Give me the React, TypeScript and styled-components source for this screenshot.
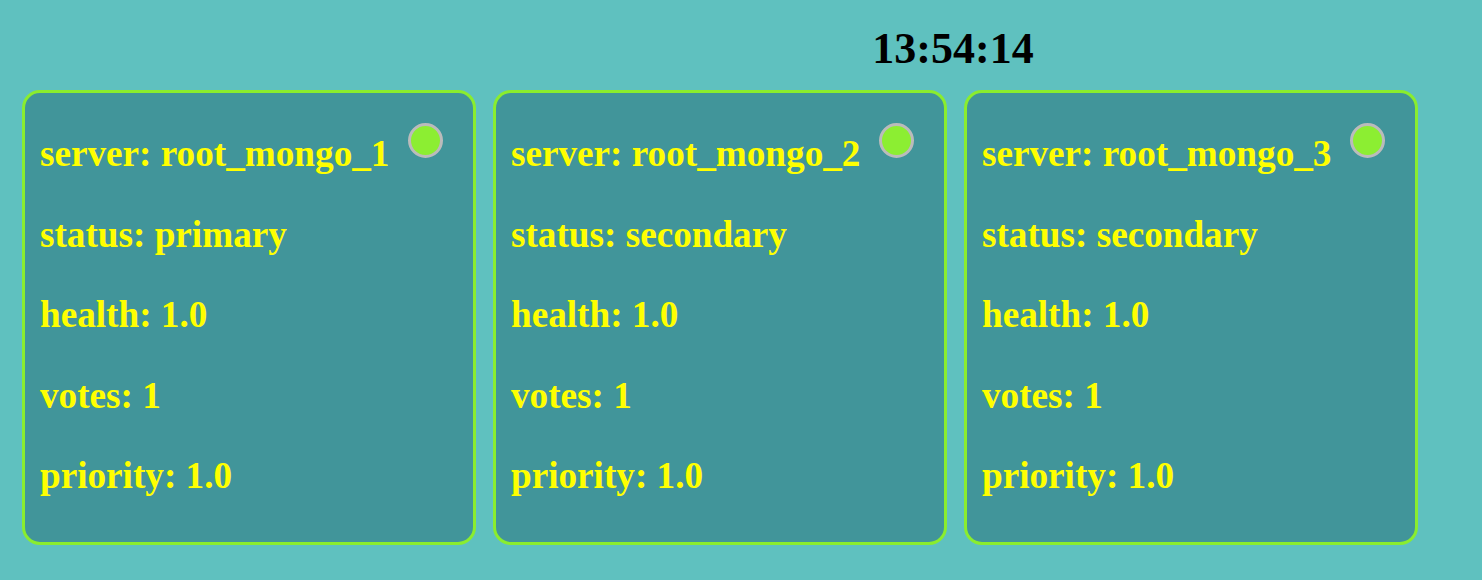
import React from "react";
import styled, { createGlobalStyle } from "styled-components";

const Global = createGlobalStyle`
  html, body {
    margin: 0;
    padding: 0;
    background: #5fc1bf;
  }
  body {
    font-family: "Liberation Serif", "Times New Roman", serif;
  }
`;

const Page = styled.div`
  display: grid;
  grid-template-columns: repeat(3, 454px);
  column-gap: 17px;
  row-gap: 16px;
  padding: 24px 0 0 22px;
  min-height: 580px;
  box-sizing: border-box;
  align-content: start;
`;

const Clock = styled.div`
  grid-column: 2 / 4;
  text-align: center;
  padding-right: 5px;
  font-size: 44px;
  line-height: 50px;
  font-weight: bold;
  color: #000;
`;

const Card = styled.div`
  position: relative;
  box-sizing: border-box;
  height: 455px;
  background: #41959a;
  border: 3px solid #8aed2e;
  border-radius: 18px;
  padding: 39px 15px 0 15px;
  display: flex;
  flex-direction: column;
  gap: 37.5px;
`;

const Line = styled.div`
  font-size: 37.2px;
  line-height: 43px;
  font-weight: bold;
  color: #ffff00;
  white-space: nowrap;
`;

const Dot = styled.span<{ $color: string }>`
  position: absolute;
  top: 30px;
  right: 30px;
  width: 35px;
  height: 35px;
  box-sizing: border-box;
  border-radius: 50%;
  background: ${(p) => p.$color};
  border: 3px solid #bbbbbb;
`;

type Member = {
  server: string;
  status: string;
  health: string;
  votes: number;
  priority: string;
};

const members: Member[] = [
  { server: "root_mongo_1", status: "primary", health: "1.0", votes: 1, priority: "1.0" },
  { server: "root_mongo_2", status: "secondary", health: "1.0", votes: 1, priority: "1.0" },
  { server: "root_mongo_3", status: "secondary", health: "1.0", votes: 1, priority: "1.0" },
];

export default function App() {
  return (
    <>
      <Global />
      <Page>
        <Clock>13:54:14</Clock>
        {members.map((m) => (
          <Card key={m.server}>
            <Dot $color="#8cee32" />
            <Line>server: {m.server}</Line>
            <Line>status: {m.status}</Line>
            <Line>health: {m.health}</Line>
            <Line>votes: {m.votes}</Line>
            <Line>priority: {m.priority}</Line>
          </Card>
        ))}
      </Page>
    </>
  );
}
